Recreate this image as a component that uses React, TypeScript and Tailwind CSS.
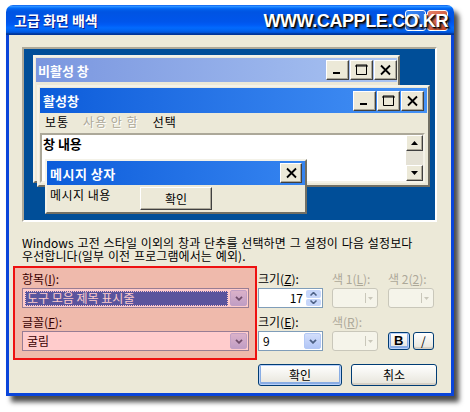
import React from "react";

const font = "font-['Noto_Sans_CJK_KR','Noto_Sans',sans-serif]";

function Glyph({ kind }: { kind: "min" | "max" | "close" }) {
  return (
    <svg width="13" height="12" viewBox="0 0 13 12">
      {kind === "min" && <rect x="2" y="8" width="7" height="2" fill="#000" />}
      {kind === "max" && (
        <path d="M1 1h11v2H1z M1.5 1.5v9h10v-9" fill="#000" stroke="#000" strokeWidth="1" />
      )}
      {kind === "max" && <rect x="2" y="3" width="9" height="7" fill="#ECE9D8" />}
      {kind === "close" && <path d="M2 1.5l9 9M11 1.5l-9 9" stroke="#000" strokeWidth="1.8" />}
    </svg>
  );
}

function ClassicBtn({ kind, w = "w-[23px]" }: { kind: "min" | "max" | "close"; w?: string }) {
  return (
    <div
      className={`${w} h-[20px] bg-[#ECE9D8] border border-t-white border-l-white border-r-[#404040] border-b-[#404040] shadow-[inset_-1px_-1px_0_#ACA899] flex items-center justify-center`}
    >
      <Glyph kind={kind} />
    </div>
  );
}

function ScrollBtn({ up }: { up?: boolean }) {
  return (
    <div className="h-[16px] bg-[#ECE9D8] border border-t-white border-l-white border-r-[#404040] border-b-[#404040] shadow-[inset_-1px_-1px_0_#ACA899] flex items-center justify-center">
      <svg width="7" height="4" viewBox="0 0 7 4">
        <path d={up ? "M3.5 0L7 4H0z" : "M0 0h7L3.5 4z"} fill="#000" />
      </svg>
    </div>
  );
}

function Preview() {
  return (
    <div className="relative w-[415px] h-[175px] shrink-0 bg-[#004E98] border-2 border-t-[#ACA899] border-l-[#ACA899] border-r-white border-b-white overflow-hidden">
      {/* inactive window */}
      <div className="absolute left-[9px] top-[6px] w-[367px] h-[128px] bg-[#ECE9D8] border-2 border-t-[#F4F2E8] border-l-[#F4F2E8] border-r-[#716F64] border-b-[#716F64] p-[1px]">
        <div className="h-[24px] flex items-center bg-gradient-to-r from-[#7A96DF] to-[#AAC4F2] pl-[2px]">
          <span className="text-white font-bold text-[13px] leading-none">비활성 창</span>
          <div className="ml-auto flex gap-[1px]">
            <ClassicBtn kind="min" />
            <ClassicBtn kind="max" />
            <ClassicBtn kind="close" />
          </div>
        </div>
      </div>

      {/* active window */}
      <div className="absolute left-[13px] top-[36px] w-[393px] h-[102px] bg-[#ECE9D8] border-2 border-t-[#F4F2E8] border-l-[#F4F2E8] border-r-[#716F64] border-b-[#716F64] p-[1px] flex flex-col">
        <div className="h-[25px] shrink-0 flex items-center bg-gradient-to-r from-[#0B5CDA] to-[#4592F6] pl-[3px] pr-[3px]">
          <span className="text-white font-bold text-[13px] leading-none">활성창</span>
          <div className="ml-auto flex gap-[1px]">
            <ClassicBtn kind="min" />
            <ClassicBtn kind="max" />
            <ClassicBtn kind="close" />
          </div>
        </div>
        <div className="h-[18px] shrink-0 flex items-center gap-[14px] pl-[5px] text-[12px] leading-none text-black">
          <span className="tracking-[1px]">보통</span>
          <span className="text-[#ACA899] tracking-[1px] [text-shadow:1px_1px_0_#fff]">사용 안 함</span>
          <span className="tracking-[1px]">선택</span>
        </div>
        <div className="mt-[2px] mr-[2px] h-[50px] flex bg-white border-2 border-t-[#ACA899] border-l-[#ACA899] border-r-[#F4F2E8] border-b-[#F4F2E8]">
          <div className="flex-1 pl-[1px] pt-[2px] text-[13px] font-bold leading-[14px]">창 내용</div>
          <div className="w-[17px] flex flex-col">
            <ScrollBtn up />
            <div className="flex-1 bg-[#E5E2D6]" />
            <ScrollBtn />
          </div>
        </div>
      </div>

      {/* message box */}
      <div className="absolute left-[21px] top-[110px] w-[262px] h-[55px] bg-[#ECE9D8] border-2 border-t-[#F4F2E8] border-l-[#F4F2E8] border-r-[#716F64] border-b-[#716F64] flex flex-col">
        <div className="h-[24px] shrink-0 flex items-center bg-gradient-to-r from-[#0B5CDA] to-[#3584F0] pl-[3px] pr-[3px]">
          <span className="text-white font-bold text-[13px] leading-none tracking-[0.5px]">메시지 상자</span>
          <div className="ml-auto">
            <ClassicBtn kind="close" w="w-[22px]" />
          </div>
        </div>
        <div className="flex items-start">
          <span className="w-[93px] pl-[3px] mt-[4px] text-[12px] leading-[12px] tracking-[0.5px]">메시지 내용</span>
          <div className="mt-[2px] w-[72px] h-[23px] bg-[#ECE9D8] border border-t-white border-l-white border-r-[#404040] border-b-[#404040] shadow-[inset_-1px_-1px_0_#ACA899] flex items-center justify-center text-[12px]">
            확인
          </div>
        </div>
      </div>
    </div>
  );
}

function XpArrow() {
  return (
    <div className="w-[17px] h-full rounded-[2px] bg-gradient-to-b from-[#D2DEFB] to-[#B2C6F6] border border-[#B3C8F5] flex items-center justify-center">
      <svg width="8" height="5" viewBox="0 0 8 5">
        <path d="M1 0.8l3 3 3-3" stroke="#4D6185" strokeWidth="1.8" fill="none" />
      </svg>
    </div>
  );
}

function Combo({ children, w, selected }: { children: React.ReactNode; w: string; selected?: boolean }) {
  return (
    <div className={`${w} h-[20px] bg-white border border-[#7F9DB9] flex items-stretch p-[1px]`}>
      <div className="flex-1 flex items-center pl-[1px] pr-[2px]">
        {selected ? (
          <div className="flex-1 h-[15px] bg-[#316AC5] text-white outline-1 outline-dotted outline-[#FFFFFF] -outline-offset-1 pl-[2px] flex items-center text-[12px] leading-none">
            {children}
          </div>
        ) : (
          <span className="pl-[2px] text-[12px] leading-none">{children}</span>
        )}
      </div>
      <XpArrow />
    </div>
  );
}

function ColorBtn({ w = "w-[46px]" }: { w?: string }) {
  return (
    <div className={`${w} h-[20px] rounded-[3px] border border-[#C9C7BA] bg-[#F5F4EA] flex items-center justify-end pr-[4px] gap-[2px]`}>
      <div className="w-px h-[10px] bg-[#C9C7BA]" />
      <svg width="5" height="3" viewBox="0 0 5 3">
        <path d="M0 0h5L2.5 3z" fill="#C9C7BA" />
      </svg>
    </div>
  );
}

function XpButton({ children, w, def, h = "h-[22px]" }: { children: React.ReactNode; w: string; def?: boolean; h?: string }) {
  return (
    <div
      className={`${w} ${h} rounded-[3px] border border-[#003C74] bg-gradient-to-b from-white to-[#E6E4DA] flex items-center justify-center text-[12px] ${
        def ? "shadow-[inset_0_0_0_1px_#B9D1FA,inset_0_-1px_0_2px_#89ADE4]" : "shadow-[inset_0_-2px_0_#D6D0C5]"
      }`}
    >
      {children}
    </div>
  );
}

export default function App() {
  const gray = "text-[#ACA899]";
  return (
    <div className={`w-[470px] h-[412px] bg-white pt-[5px] pl-[6px] ${font} text-black`}>
      <div className="w-[448px] h-[391px] flex flex-col rounded-t-[7px] shadow-[5px_6px_5px_rgba(0,0,0,0.7)]">
        {/* title bar */}
        <div className="relative h-[30px] shrink-0 rounded-t-[7px] flex items-center pl-[8px] pr-[6px] bg-[linear-gradient(to_bottom,#0058EE_0%,#3593FF_4%,#288EFF_6%,#127DFF_8%,#036FFC_10%,#0262EE_14%,#0057E5_20%,#0054E3_24%,#0055EB_56%,#005BF5_66%,#026AFE_76%,#0062EF_86%,#0052D6_92%,#0040AB_94%,#003092_100%)]">
          <span className="text-white font-bold text-[14px] leading-none [text-shadow:1px_1px_0_#0A1E8C]">고급 화면 배색</span>
          <div className="ml-auto flex gap-[1px]">
            <div className="w-[21px] h-[21px] rounded-[3px] border border-white bg-gradient-to-br from-[#3C8CF7] to-[#1F5CD6] flex items-center justify-center">
              <svg width="9" height="13" viewBox="0 0 9 13">
                <path d="M1.5 3.5C1.5 1.8 3 1 4.5 1S7.5 1.8 7.5 3.5 5 5.5 5 8" stroke="#fff" strokeWidth="2" fill="none" />
                <rect x="4" y="10" width="2" height="2" fill="#fff" />
              </svg>
            </div>
            <div className="w-[21px] h-[21px] rounded-[3px] border border-white bg-gradient-to-br from-[#E8836A] to-[#C2401F]" />
          </div>
          <div className="absolute right-[6px] top-0 h-full flex items-center pt-[1px]">
            <span className="text-white font-bold text-[18px] tracking-[-0.4px] leading-none font-['Liberation_Sans',sans-serif] [text-shadow:1px_1px_1px_#000,2px_2px_2px_#222]">
              WWW.CAPPLE.CO.KR
            </span>
          </div>
        </div>

        {/* body */}
        <div className="flex-1 flex flex-col bg-[#ECE9D8] border-x-[3px] border-b-[3px] border-[#0A45DA] pl-[13px] pt-[12px]">
          <Preview />

          <p className="mt-[14px] text-[12px] leading-[13px] tracking-[0.1px] [word-spacing:1px]">
            Windows 고전 스타일 이외의 창과 단추를 선택하면 그 설정이 다음 설정보다
            <br />
            우선합니다(일부 이전 프로그램에서는 예외).
          </p>

          <div className="relative mt-[4px] pt-[7px] grid grid-cols-[236px_74px_56px_46px] text-[12px] leading-[12px]">
            <span>항목(<u>I</u>):</span>
            <span>크기(<u>Z</u>):</span>
            <span className={gray}>색 1(<u>L</u>):</span>
            <span className={gray}>색 2(<u>2</u>):</span>

            <div className="mt-[3px]">
              <Combo w="w-[227px]" selected>
                도구 모음 제목 표시줄
              </Combo>
            </div>
            <div className="mt-[3px] w-[65px] h-[20px] bg-white border border-[#7F9DB9] flex p-[1px]">
              <span className="flex-1 text-right pr-[3px] self-center">17</span>
              <div className="w-[15px] flex flex-col gap-px">
                <div className="flex-1 rounded-[2px] bg-[#C6D6FA] flex items-center justify-center">
                  <svg width="7" height="4" viewBox="0 0 7 4"><path d="M0.5 3.5l3-3 3 3" stroke="#4D6185" strokeWidth="1.5" fill="none" /></svg>
                </div>
                <div className="flex-1 rounded-[2px] bg-[#C6D6FA] flex items-center justify-center">
                  <svg width="7" height="4" viewBox="0 0 7 4"><path d="M0.5 0.5l3 3 3-3" stroke="#4D6185" strokeWidth="1.5" fill="none" /></svg>
                </div>
              </div>
            </div>
            <div className="mt-[3px]"><ColorBtn /></div>
            <div className="mt-[3px]"><ColorBtn /></div>

            <span className="mt-[8px]">글꼴(<u>F</u>):</span>
            <span className="mt-[8px]">크기(<u>E</u>):</span>
            <span className={`mt-[8px] ${gray}`}>색(<u>R</u>):</span>
            <span className="mt-[8px]" />

            <div className="mt-[3px]">
              <Combo w="w-[227px]">굴림</Combo>
            </div>
            <div className="mt-[3px]">
              <Combo w="w-[65px]">9</Combo>
            </div>
            <div className="mt-[3px]"><ColorBtn /></div>
            <div className="mt-[4px] flex gap-[3px]">
              <XpButton w="w-[22px]" h="h-[18px]" def>
                <span className="font-bold text-[13px] font-['Liberation_Sans',sans-serif]">B</span>
              </XpButton>
              <XpButton w="w-[22px]" h="h-[18px]">
                <span className="text-[12px]">/</span>
              </XpButton>
            </div>

            {/* red highlight annotation */}
            <div className="absolute left-[-9px] top-0 w-[244px] h-[94px] bg-[rgba(255,0,0,0.2)] border-2 border-[#EE1111] pointer-events-none" />
          </div>

          <div className="mt-[13px] ml-[236px] flex gap-[9px]">
            <XpButton w="w-[84px]" def>확인</XpButton>
            <XpButton w="w-[86px]">취소</XpButton>
          </div>
        </div>
      </div>
    </div>
  );
}
